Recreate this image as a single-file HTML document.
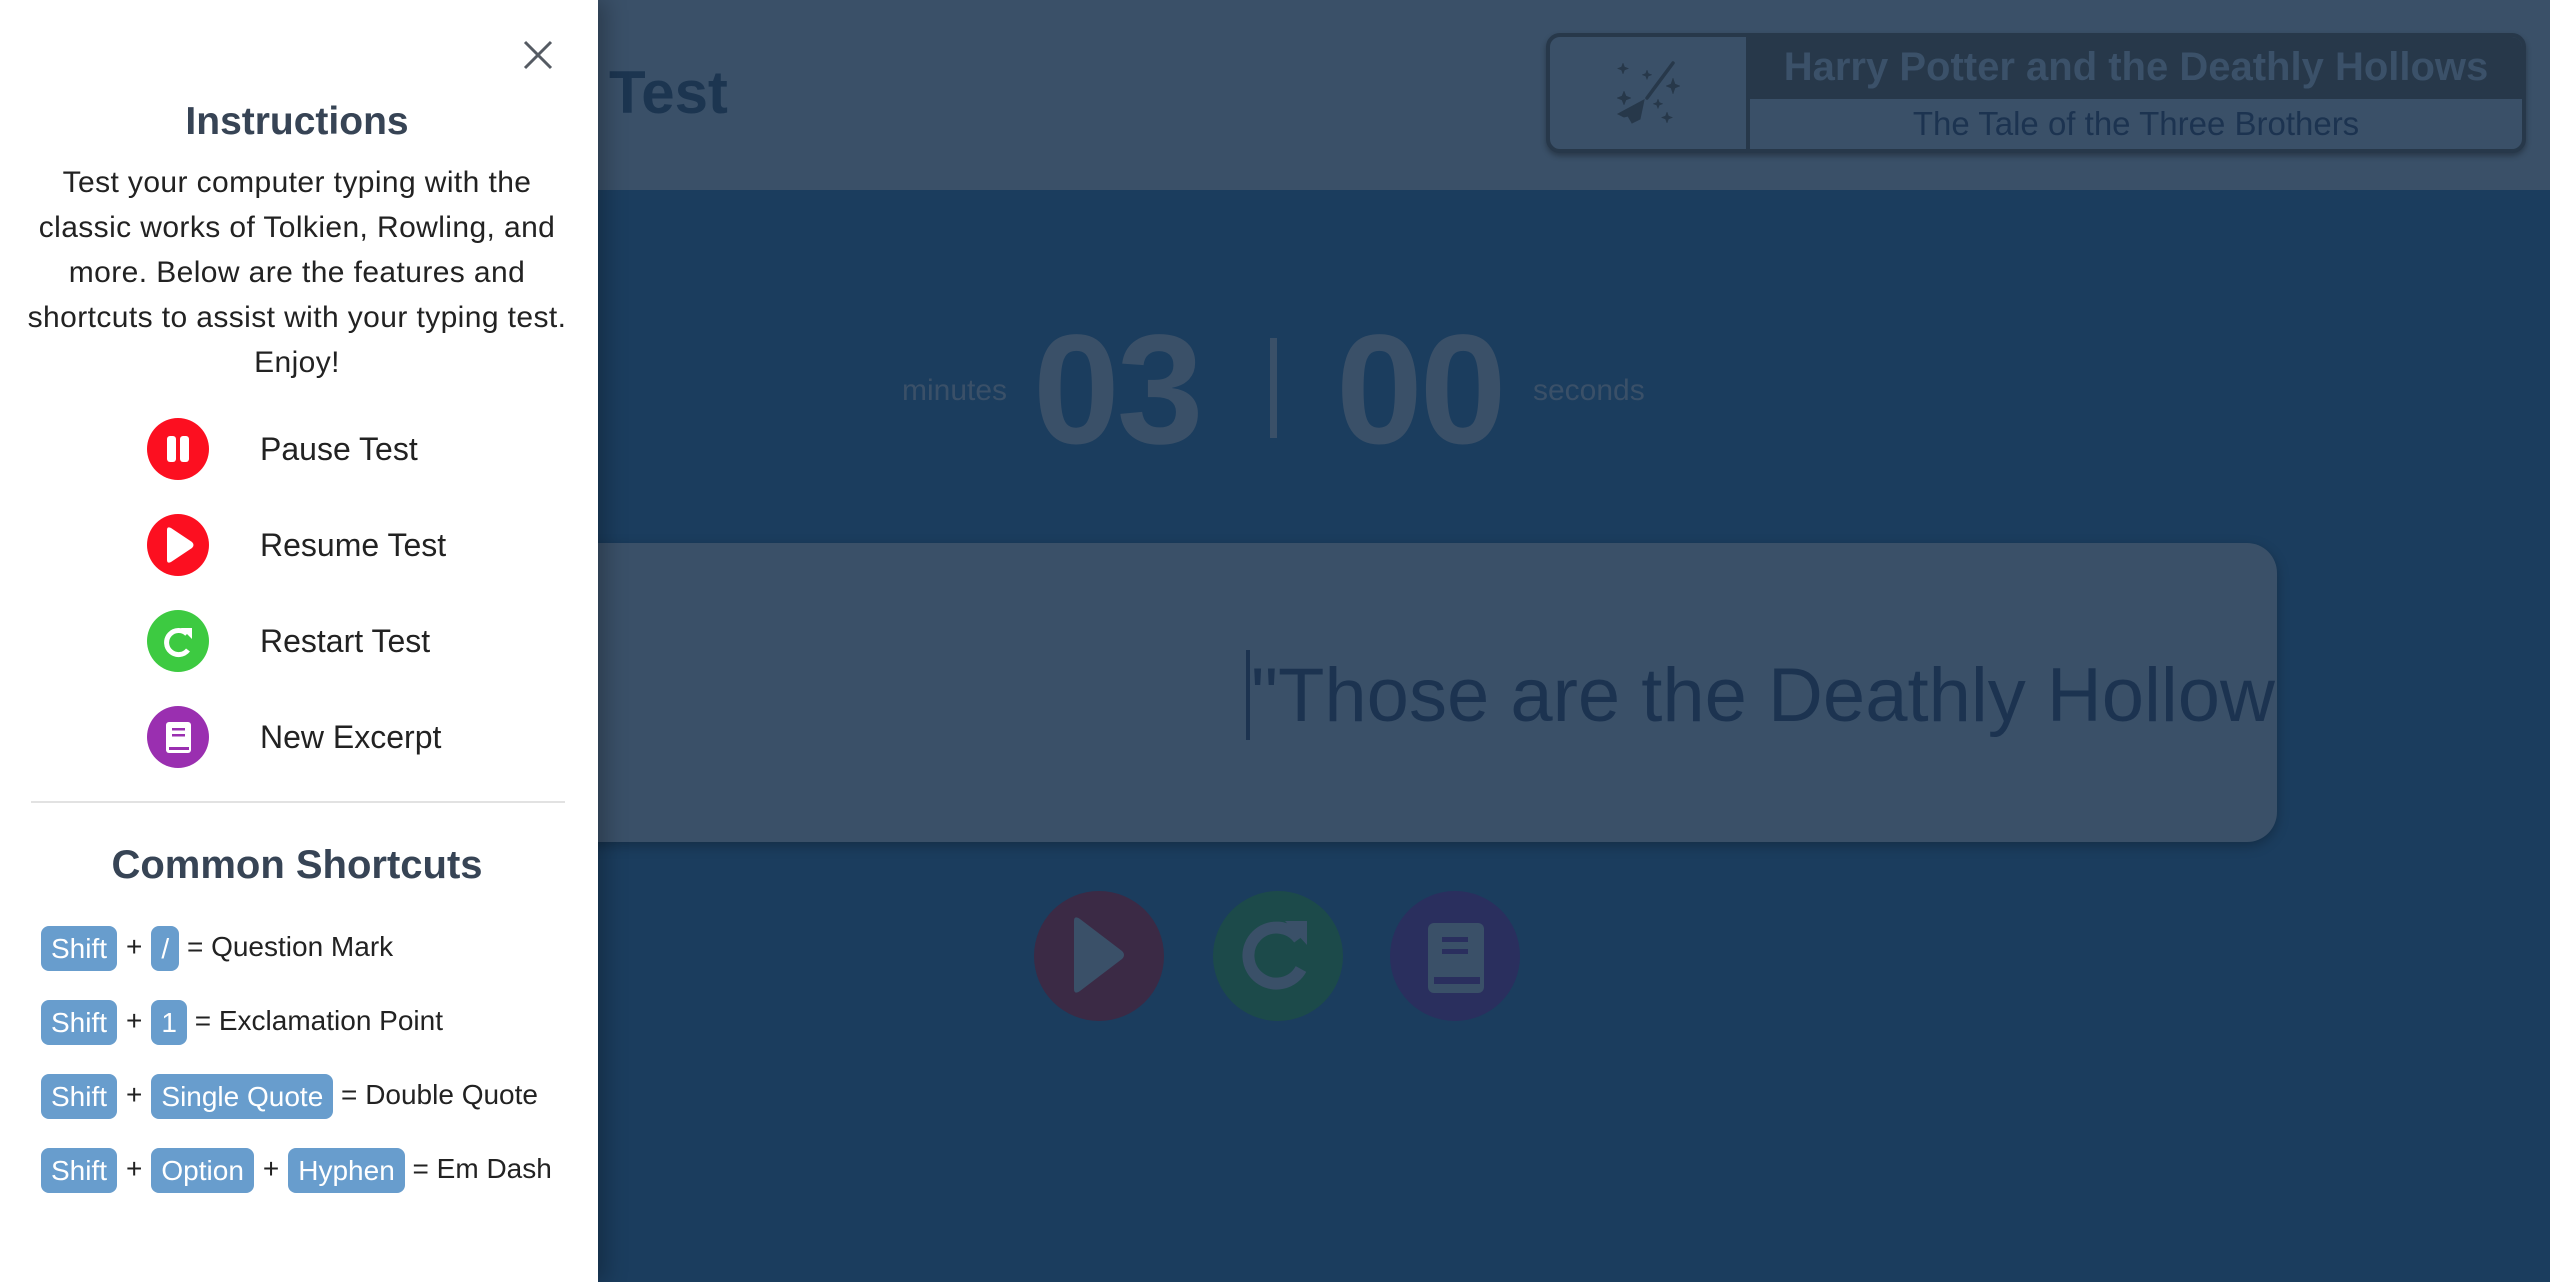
<!DOCTYPE html>
<html><head><meta charset="utf-8"><style>
*{margin:0;padding:0;box-sizing:border-box}
body{width:2550px;height:1282px;overflow:hidden;background:#1b3d5e;font-family:"Liberation Sans",Arial,sans-serif;position:relative}
.abs{position:absolute}
#hdr{left:0;top:0;width:2550px;height:190px;background:#3a5068}
#side{left:0;top:0;width:598px;height:1282px;background:#fff;box-shadow:8px 0 20px rgba(0,0,0,.25)}
.c{text-align:center}
.key{display:inline-block;background:#689dcd;color:#fff;border-radius:8px;height:45px;line-height:45px;padding:0 10px;vertical-align:middle}
.row{position:absolute;left:41px;font-size:28px;color:#222;height:45px;line-height:45px;white-space:nowrap}
.row span.p{margin:0 9px}
.ic{position:absolute;left:147px;width:62px;height:62px;border-radius:50%}
.lbl{position:absolute;left:260px;font-size:32px;color:#222;line-height:40px}
</style></head><body>
<div id="hdr" class="abs"></div>
<div class="abs" style="left:609px;top:58px;font-size:60px;font-weight:bold;color:#1c3550;line-height:70px">Test</div>
<div class="abs" style="left:1546px;top:33px;width:980px;height:120px;border:4px solid #27384a;border-radius:14px;background:#3a5068;box-shadow:0 3px 6px rgba(0,0,0,.3);overflow:hidden">
  <div class="abs" style="left:196px;top:0;width:4px;height:120px;background:#27384a"></div>
  <div class="abs" style="left:200px;top:0;right:0;height:62px;background:#27384a;color:#3b5169;font-weight:bold;font-size:40px;text-align:center;line-height:60px">Harry Potter and the Deathly Hollows</div>
  <div class="abs" style="left:200px;top:62px;right:0;height:54px;color:#1c3350;font-size:33px;text-align:center;line-height:50px">The Tale of the Three Brothers</div>
</div>
<svg class="abs" style="left:1560px;top:40px" width="180" height="100" viewBox="0 0 180 100">
<g fill="#27384a" stroke="#27384a">
<line x1="113" y1="23" x2="87" y2="58" stroke-width="3.5" stroke-linecap="round"/>
<path d="M84 60 L58 74 L64 77 L68 76 L72 83 L80 79 Z" stroke-width="1"/>
<path d="M63 23 l1.5 4 4 1.5 -4 1.5 -1.5 4 -1.5 -4 -4 -1.5 4 -1.5z M87 30 l1.3 3.5 3.5 1.3 -3.5 1.3 -1.3 3.5 -1.3 -3.5 -3.5 -1.3 3.5 -1.3z M113 38 l2 6 5 2 -5 2 -2 6 -2 -6 -5 -2 5 -2z M64 51 l2 5 5 2 -5 2 -2 5 -2 -5 -5 -2 5 -2z M98 59 l1.3 3.5 3.5 1.3 -3.5 1.3 -1.3 3.5 -1.3 -3.5 -3.5 -1.3 3.5 -1.3z M107 72 l1.5 4 4 1.5 -4 1.5 -1.5 4 -1.5 -4 -4 -1.5 4 -1.5z" stroke-width="0.5"/>
</g></svg>
<div class="abs" style="left:902px;top:374px;font-size:30px;color:#3a5068">minutes</div>
<div class="abs" style="left:1033px;top:305px;font-size:156px;font-weight:bold;color:#3a5068;line-height:170px;letter-spacing:-3px">03</div>
<div class="abs" style="left:1270px;top:338px;width:7px;height:100px;background:#3a5068"></div>
<div class="abs" style="left:1336px;top:305px;font-size:156px;font-weight:bold;color:#3a5068;line-height:170px;letter-spacing:-3px">00</div>
<div class="abs" style="left:1533px;top:374px;font-size:30px;color:#3a5068">seconds</div>
<div class="abs" style="left:400px;top:543px;width:1877px;height:299px;background:#3a5068;border-radius:30px;box-shadow:0 4px 12px rgba(0,0,0,.25);overflow:hidden">
  <div class="abs" style="left:846px;top:107px;width:4px;height:90px;background:#1c3350"></div>
  <div class="abs" style="left:851px;top:108px;font-size:76px;color:#1c3350;line-height:90px;white-space:nowrap">"Those are the Deathly Hollows</div>
</div>
<div class="abs" style="left:1034px;top:891px;width:130px;height:130px;border-radius:50%;background:#3b2a45"><svg width="130" height="130"><path d="M40 30 L40 98 Q40 104 46 100 L88 68 Q92 64 88 60 L46 28 Q40 24 40 30Z" fill="#3a5068"/></svg></div>
<div class="abs" style="left:1213px;top:891px;width:130px;height:130px;border-radius:50%;background:#1c4a4a"><svg width="130" height="130"><path d="M86 48 A28 28 0 1 0 88 78" fill="none" stroke="#3a5068" stroke-width="12"/><path d="M72 30 L94 30 L94 54 Z" fill="#3a5068"/></svg></div>
<div class="abs" style="left:1390px;top:891px;width:130px;height:130px;border-radius:50%;background:#2a2f5e"><svg width="130" height="130"><rect x="38" y="32" width="56" height="70" rx="6" fill="#3a5068"/><rect x="52" y="46" width="26" height="5" fill="#2a2f5e"/><rect x="52" y="58" width="26" height="5" fill="#2a2f5e"/><rect x="44" y="86" width="46" height="7" fill="#2a2f5e"/></svg></div>
<div id="side" class="abs">
  <svg class="abs" style="left:522px;top:39px" width="32" height="32"><path d="M3 3 L29 29 M29 3 L3 29" stroke="#555b63" stroke-width="3"/></svg>
  <div class="abs c" style="left:0;width:594px;top:98px;font-size:39px;font-weight:bold;color:#374455;line-height:48px">Instructions</div>
  <div class="abs c" style="left:0;width:594px;top:160px;font-size:30px;letter-spacing:0.4px;color:#222;line-height:45px;white-space:nowrap">Test your computer typing with the<br>classic works of Tolkien, Rowling, and<br>more. Below are the features and<br>shortcuts to assist with your typing test.<br>Enjoy!</div>
  <div class="ic" style="top:418px;background:#fc0f20"><svg width="62" height="62"><rect x="20" y="18" width="9" height="26" rx="3" fill="#fff"/><rect x="33" y="18" width="9" height="26" rx="3" fill="#fff"/></svg></div>
  <div class="lbl" style="top:429px">Pause Test</div>
  <div class="ic" style="top:514px;background:#fc0f20"><svg width="62" height="62"><path d="M20 16 L20 46 Q20 50 24 48 L45 34 Q48 31 45 28 L24 14 Q20 12 20 16Z" fill="#fff"/></svg></div>
  <div class="lbl" style="top:525px">Resume Test</div>
  <div class="ic" style="top:610px;background:#3dca41"><svg width="62" height="62"><path d="M40 24 A12 12 0 1 0 41 40" fill="none" stroke="#fff" stroke-width="5"/><path d="M34 18 L45 18 L45 29 Z" fill="#fff"/></svg></div>
  <div class="lbl" style="top:621px">Restart Test</div>
  <div class="ic" style="top:706px;background:#9a2fb0"><svg width="62" height="62"><rect x="19" y="16" width="25" height="31" rx="3" fill="#fff"/><rect x="25" y="22" width="13" height="2.5" fill="#9a2fb0"/><rect x="25" y="28" width="13" height="2.5" fill="#9a2fb0"/><rect x="22" y="41" width="20" height="3" fill="#9a2fb0"/></svg></div>
  <div class="lbl" style="top:717px">New Excerpt</div>
  <div class="abs" style="left:31px;top:801px;width:534px;height:2px;background:#e2e2e2"></div>
  <div class="abs c" style="left:0;width:594px;top:840px;font-size:40px;font-weight:bold;color:#374455;line-height:50px">Common Shortcuts</div>
  <div class="row" style="top:924px"><span class="key">Shift</span><span class="p">+</span><span class="key">/</span> = Question Mark</div>
  <div class="row" style="top:998px"><span class="key">Shift</span><span class="p">+</span><span class="key">1</span> = Exclamation Point</div>
  <div class="row" style="top:1072px"><span class="key">Shift</span><span class="p">+</span><span class="key">Single Quote</span> = Double Quote</div>
  <div class="row" style="top:1146px"><span class="key">Shift</span><span class="p">+</span><span class="key">Option</span><span class="p">+</span><span class="key">Hyphen</span> = Em Dash</div>
</div>
</body></html>
